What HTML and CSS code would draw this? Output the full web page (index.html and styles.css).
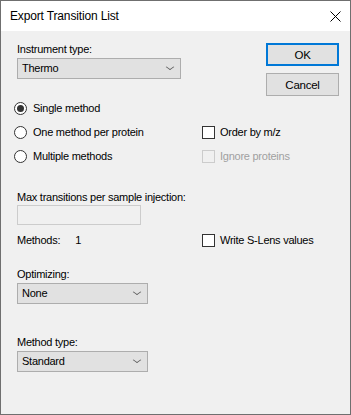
FILE: index.html
```html
<!DOCTYPE html>
<html lang="en">
<head>
  <meta charset="UTF-8" />
  <title>Export Transition List</title>
<link rel="stylesheet" href="styles.css">
</head>
<body>

<div class="window">
  <div class="titlebar">
    <span class="title">Export Transition List</span>
    <svg class="close" width="11" height="11" viewBox="0 0 11 11">
      <path d="M0.5 0.5 L10.5 10.5 M10.5 0.5 L0.5 10.5" stroke="#000" stroke-width="1" fill="none"/>
    </svg>
  </div>

  <div class="content">
    <div class="top-row">
      <div class="field">
        <div class="label">Instrument type:</div>
        <div class="combo wide">Thermo<span class="chevron"></span></div>
      </div>
      <div class="buttons">
        <div class="button default">OK</div>
        <div class="button">Cancel</div>
      </div>
    </div>

    <div class="option-row">
      <div class="radio checked"><span class="dot"></span>Single method</div>
      <div></div>
    </div>
    <div class="option-row">
      <div class="radio"><span class="dot"></span>One method per protein</div>
      <div class="check"><span class="box"></span>Order by m/z</div>
    </div>
    <div class="option-row">
      <div class="radio"><span class="dot"></span>Multiple methods</div>
      <div class="check disabled"><span class="box"></span>Ignore proteins</div>
    </div>

    <div class="label max-label">Max transitions per sample injection:</div>
    <div class="textbox"></div>

    <div class="methods-row">
      <div class="methods">Methods:<span class="count">1</span></div>
      <div class="check"><span class="box"></span>Write S-Lens values</div>
    </div>

    <div class="label opt-label">Optimizing:</div>
    <div class="combo">None<span class="chevron"></span></div>

    <div class="label type-label">Method type:</div>
    <div class="combo">Standard<span class="chevron"></span></div>
  </div>
</div>

</body>
</html>
```

FILE: styles.css
```css
html, body {
  margin: 0;
  padding: 0;
}

body {
  font-family: 'Liberation Sans', Arial, sans-serif;
  font-size: 11px;
  letter-spacing: -0.25px;
  color: #000;
  background: #f0f0f0;
}

.window {
  width: 351px;
  height: 415px;
  box-sizing: border-box;
  border: 1px solid #6f6f6f;
  background: #f0f0f0;
}

.titlebar {
  height: 30px;
  background: #fff;
  display: flex;
  align-items: center;
  justify-content: space-between;
  padding: 0 9px 0 9px;
}

.title {
  font-size: 12px;
  letter-spacing: -0.15px;
  color: #000;
}

.close {
  display: block;
  margin-top: 1px;
}

.content {
  padding: 11px 0 0 16px;
}

.label {
  height: 15px;
  line-height: 15px;
}

.top-row {
  display: flex;
  justify-content: space-between;
  height: 54px;
}

.combo {
  position: relative;
  width: 131px;
  height: 21px;
  box-sizing: border-box;
  margin-top: 1px;
  background: #e1e1e1;
  border: 1px solid #adadad;
  padding-left: 4px;
  line-height: 19px;
}

.combo.wide {
  width: 164px;
}

.chevron {
  position: absolute;
  right: 7px;
  top: 5px;
  width: 5px;
  height: 5px;
  border-right: 1px solid #606060;
  border-bottom: 1px solid #606060;
  transform: scaleY(0.7) rotate(45deg);
}

.buttons {
  display: flex;
  flex-direction: column;
  gap: 7px;
  margin: 1px 11px 0 0;
}

.button {
  width: 73px;
  height: 23px;
  box-sizing: border-box;
  background: #e1e1e1;
  border: 1px solid #adadad;
  display: flex;
  align-items: center;
  justify-content: center;
  font-size: 11.5px;
}

.button.default {
  border: 2px solid #0078d7;
}

.option-row {
  display: grid;
  grid-template-columns: 188px auto;
  align-items: center;
  height: 24px;
  margin-left: -3px;
}

.radio, .check {
  display: flex;
  align-items: center;
}

.radio .dot {
  width: 13px;
  height: 13px;
  box-sizing: border-box;
  border: 1px solid #333;
  border-radius: 50%;
  background: #fff;
  margin-right: 6px;
  display: flex;
  align-items: center;
  justify-content: center;
}

.radio.checked .dot::after {
  content: "";
  width: 7px;
  height: 7px;
  border-radius: 50%;
  background: #333;
}

.check .box {
  width: 13px;
  height: 13px;
  box-sizing: border-box;
  border: 1px solid #333;
  background: #fff;
  margin-right: 5px;
}

.check.disabled {
  color: #a0a0a0;
}

.check.disabled .box {
  border-color: #cccccc;
  background: #f0f0f0;
}

.max-label {
  margin-top: 22px;
}

.textbox {
  width: 124px;
  height: 20px;
  box-sizing: border-box;
  border: 1px solid #cccccc;
  background: #f0f0f0;
}

.methods-row {
  display: grid;
  grid-template-columns: 185px auto;
  align-items: center;
  height: 22px;
  margin-top: 4px;
}

.methods .count {
  margin-left: 15px;
}

.opt-label {
  margin-top: 16px;
}

.type-label {
  margin-top: 31px;
}
```
